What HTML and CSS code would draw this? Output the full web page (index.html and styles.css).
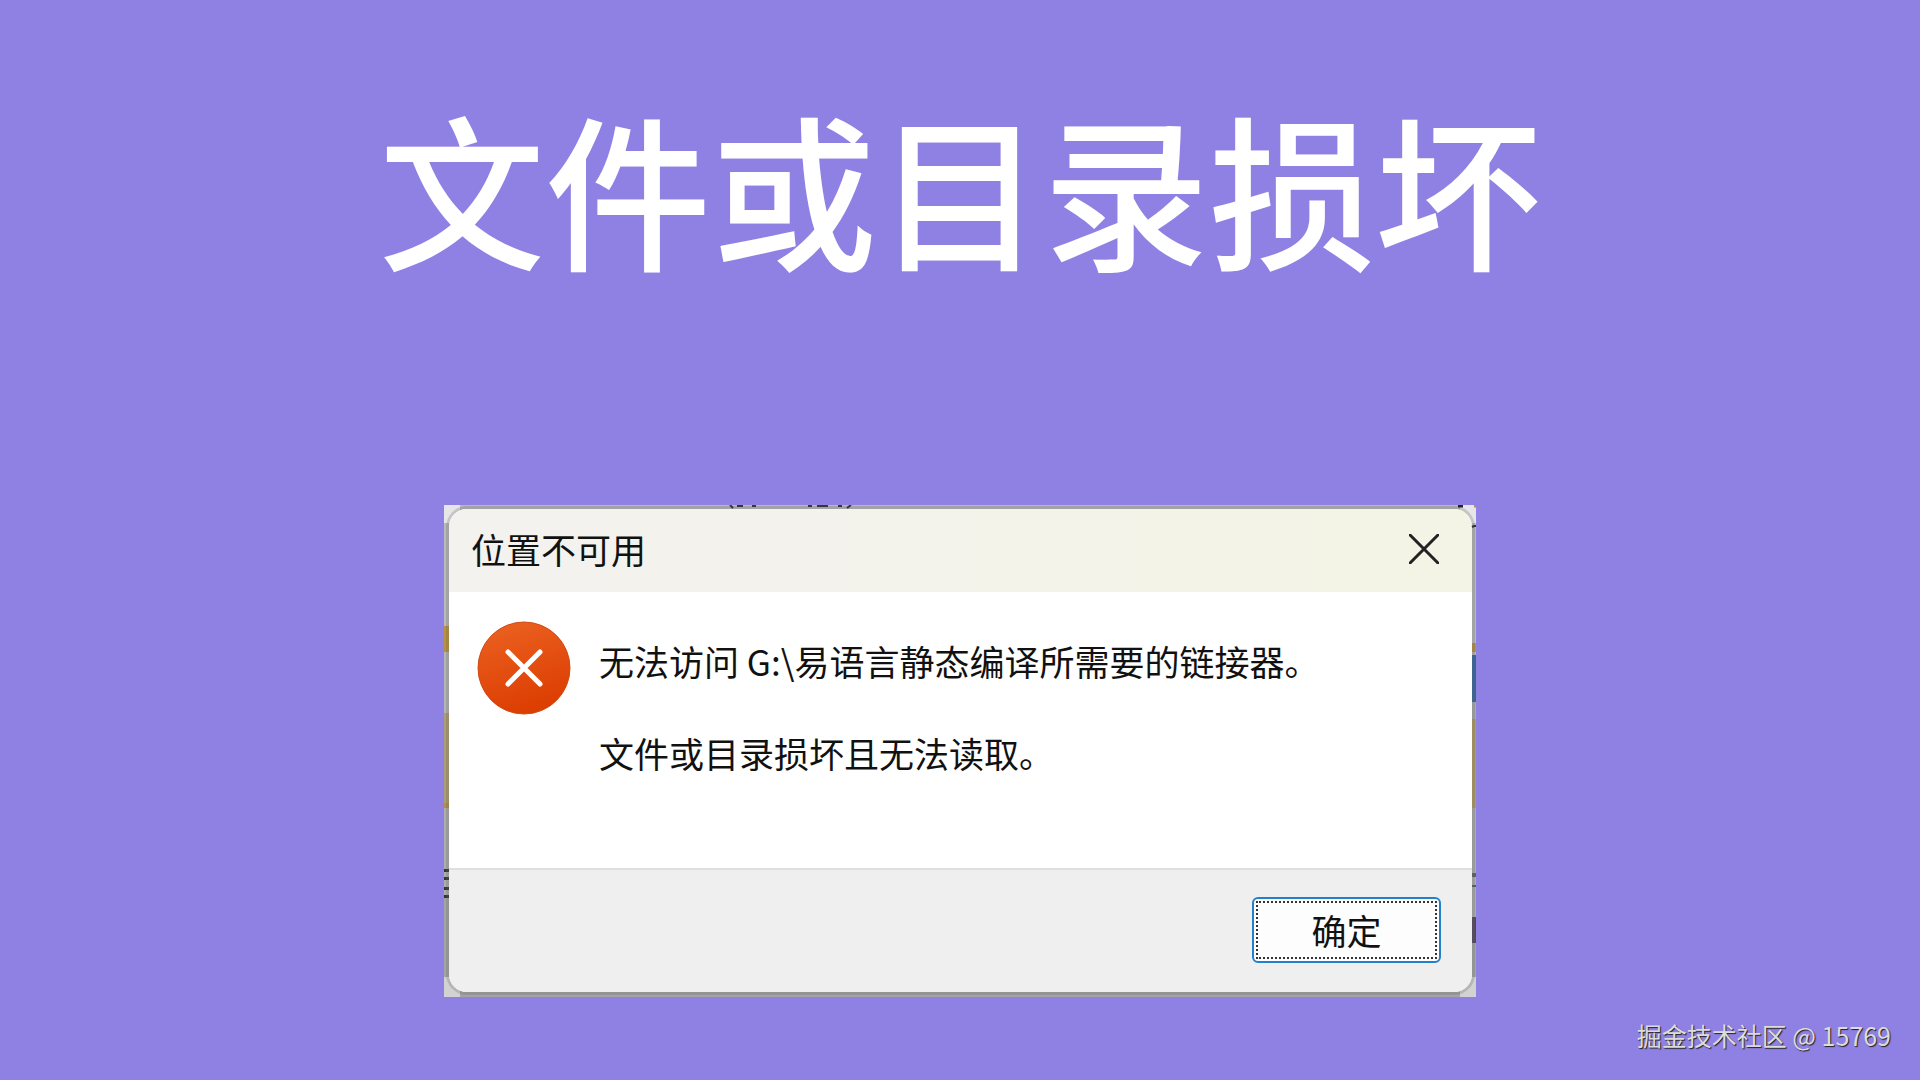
FILE: index.html
```html
<!DOCTYPE html>
<html lang="zh-CN">

<head>
  <meta charset="UTF-8" />
  <meta name="viewport" content="width=device-width, initial-scale=1" />
  <title>文件或目录损坏</title>
  <link rel="stylesheet" href="styles.css">
</head>

<body>
  <h1>文件或目录损坏</h1>

  <main class="shot">
    <div class="dialog" role="alertdialog" aria-labelledby="dialogTitle" aria-describedby="dialogText">
      <div class="titlebar">
        <h2 id="dialogTitle">位置不可用</h2>
        <button class="close" type="button" aria-label="关闭">
          <svg width="30" height="30" viewBox="0 0 30 30">
            <path d="M1 1L29 29M29 1L1 29" fill="none" stroke="#222" stroke-width="3" stroke-linecap="round" />
          </svg>
        </button>
      </div>

      <div class="content">
        <svg class="error-icon" width="94" height="94" viewBox="0 0 94 94" aria-hidden="true">
          <defs>
            <linearGradient id="red" x1="0.3" y1="0" x2="0.6" y2="1">
              <stop offset="0" stop-color="#ea6020" />
              <stop offset="1" stop-color="#dc3c00" />
            </linearGradient>
          </defs>
          <circle cx="47" cy="47" r="46" fill="url(#red)" stroke="#d24a14" />
          <path d="M31 31L63 63M63 31L31 63" fill="none" stroke="#fff" stroke-width="5" stroke-linecap="round" />
        </svg>
        <div class="text" id="dialogText">
          <p>无法访问 G:\易语言静态编译所需要的链接器。</p>
          <p>文件或目录损坏且无法读取。</p>
        </div>
      </div>

      <div class="actions">
        <button class="ok" type="button"><span>确定</span></button>
      </div>
    </div>

    <!-- bits of the desktop behind the window -->
    <svg class="scrap scrap-top" width="124" height="4" viewBox="0 0 124 4" aria-hidden="true">
      <path d="M2 0l3 3M9 1h6M24 1h4M80 1h4M89 1h11M110 1h4M123 0l-4 3" fill="none" stroke="#34343c" stroke-width="2" />
    </svg>
    <svg class="scrap scrap-corner" width="18" height="24" viewBox="0 0 18 24" aria-hidden="true">
      <path d="M0 1h5" stroke="#222" stroke-width="3" />
      <path d="M16 1h2" stroke="#c8874a" stroke-width="3" />
      <path d="M14 22l2-1h2" fill="none" stroke="#333" stroke-width="2" />
    </svg>
  </main>

  <footer>掘金技术社区 @ 15769</footer>
</body>

</html>
```

FILE: styles.css
```css
* {
  box-sizing: border-box;
  margin: 0;
  padding: 0;
}

body {
  display: flex;
  flex-direction: column;
  align-items: center;
  min-height: 100vh;
  padding-top: 96px;
  font-family: "Noto Sans CJK SC", sans-serif;
  background-color: #8f80e4;
  color: #111;
}

h1 {
  font-size: 166px;
  font-weight: 500;
  line-height: 180px;
  text-align: center;
  color: #fff;
}

.shot {
  position: relative;
  width: 100%;
  max-width: 1032px;
  margin-top: 229px;
  padding: 4px 4px 5px 5px;
  background:
    linear-gradient(#b9b9bb, #a4a4a4) center / calc(100% - 32px) 100% no-repeat,
    linear-gradient(#e6e6e8, #e6e6e8) top / 100% 18px no-repeat,
    linear-gradient(#d2d2d2, #d2d2d2) bottom / 100% 20px no-repeat,
    linear-gradient(#b9b9bb 121px, #b8923c 121px, #b8923c 147px, #b5b5b5 147px, #b5b5b5 208px, #ac9d72 208px, #ac9d72 298px, #b58f3e 298px, #b58f3e 303px, #adadad 303px, #adadad 364px, #333 364px, #333 367px, #adadad 367px, #adadad 372px, #333 372px, #333 375px, #adadad 375px, #adadad 382px, #333 382px, #333 385px, #adadad 385px, #adadad 390px, #333 390px, #333 393px, #a4a4a4 393px) left / 5px 100% no-repeat,
    linear-gradient(#b9b9bb 138px, #b8923c 138px, #b8923c 147px, #b5b5b5 147px, #b5b5b5 150px, #32659f 150px, #32659f 197px, #a9a9ad 197px, #a9a9ad 214px, #b09c62 214px, #b09c62 303px, #adadad 303px, #adadad 368px, #56616a 368px, #56616a 372px, #adadad 372px, #adadad 380px, #46616a 380px, #46616a 382px, #adadad 382px, #adadad 412px, #53465c 412px, #53465c 438px, #a4a4a4 438px) right / 5px 100% no-repeat;
}

.scrap {
  position: absolute;
  top: 0;
}

.scrap-top {
  left: 27.5%;
}

.scrap-corner {
  right: 0;
}

.dialog {
  overflow: hidden;
  border-radius: 18px;
  background-color: #fff;
  box-shadow: 0 0 0 3px rgba(100, 100, 100, 0.25);
}

.titlebar {
  display: flex;
  justify-content: space-between;
  align-items: flex-start;
  height: 83px;
  padding: 17px 25px 0 22px;
  background: linear-gradient(90deg, #f3f2ef, #f3f3eb 50%, #f3f4e5);
}

h2 {
  font-size: 35px;
  font-weight: 400;
  line-height: 46px;
}

.close {
  display: flex;
  padding: 8px;
  border: none;
  background: none;
  cursor: pointer;
}

.content {
  display: flex;
  align-items: flex-start;
  gap: 28px;
  padding: 29px 28px 92px;
}

.error-icon {
  flex-shrink: 0;
}

.text {
  padding-top: 17px;
}

.text p {
  font-size: 35px;
  line-height: 46px;
}

.text p + p {
  margin-top: 46px;
}

.actions {
  display: flex;
  justify-content: flex-end;
  padding: 27px 31px 29px;
  border-top: 2px solid #dfdfdf;
  background-color: #efefef;
}

.ok {
  width: 189px;
  height: 66px;
  padding: 2px;
  border: 2px solid #2380cb;
  border-radius: 6px;
  background-color: #fdfdfd;
  font-family: inherit;
  font-size: 35px;
  line-height: 54px;
  color: #111;
  cursor: pointer;
}

.ok span {
  display: block;
  border: 2px dotted #333;
}

footer {
  margin-top: auto;
  align-self: flex-end;
  padding: 0 29px 27px;
  font-size: 25px;
  line-height: 36px;
  color: #dcdcdc;
  text-shadow: 1px 1px 1px #222;
}
```
